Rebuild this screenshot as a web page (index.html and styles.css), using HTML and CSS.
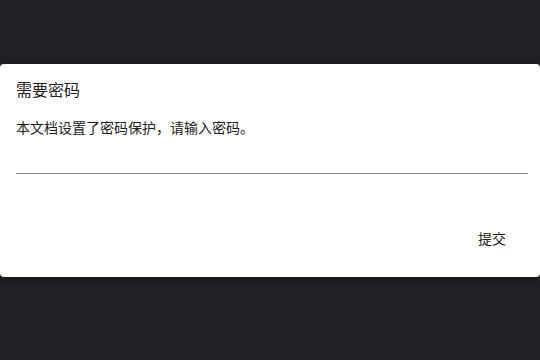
FILE: index.html
```html
<!DOCTYPE html>
<html lang="zh-CN">
<head>
<meta charset="utf-8">
<title>需要密码</title>
<link rel="stylesheet" href="styles.css">
</head>
<body>
<div class="page">
  <div class="dialog">
    <h2 class="title">需要密码</h2>
    <p class="message">本文档设置了密码保护，请输入密码。</p>
    <div class="field"><input class="input" type="password" aria-label="密码"></div>
    <div class="actions"><button class="submit" type="button">提交</button></div>
  </div>
</div>
</body>
</html>
```

FILE: styles.css
```css
html, body {
  margin: 0;
  padding: 0;
  height: 100%;
}
body {
  background: #202124;
  font-family: "Noto Sans CJK SC", "Noto Sans", sans-serif;
  overflow: hidden;
}
.page {
  padding-top: 64px;
}
.dialog {
  background: #ffffff;
  border-radius: 4px;
  height: 213px;
  box-sizing: border-box;
  padding: 13px 12px 0 16px;
  box-shadow: 0 2px 6px rgba(0,0,0,0.45);
  display: flex;
  flex-direction: column;
}
.title {
  margin: 0;
  font-size: 16px;
  line-height: 24px;
  font-weight: 400;
  color: #212121;
}
.message {
  margin: 16px 0 0;
  font-size: 14px;
  line-height: 20px;
  color: #212121;
}
.field {
  margin-top: 0;
}
.input {
  display: block;
  width: 100%;
  box-sizing: border-box;
  height: 37px;
  border: 0;
  border-bottom: 1px solid #8e8e8e;
  outline: none;
  background: transparent;
  padding: 0;
  font-size: 14px;
}
.actions {
  display: flex;
  justify-content: flex-end;
  margin-top: 46px;
}
.submit {
  background: transparent;
  border: 0;
  font-family: inherit;
  font-size: 14px;
  line-height: 20px;
  color: #212121;
  padding: 8px 22px 8px 8px;
  cursor: pointer;
}
```
